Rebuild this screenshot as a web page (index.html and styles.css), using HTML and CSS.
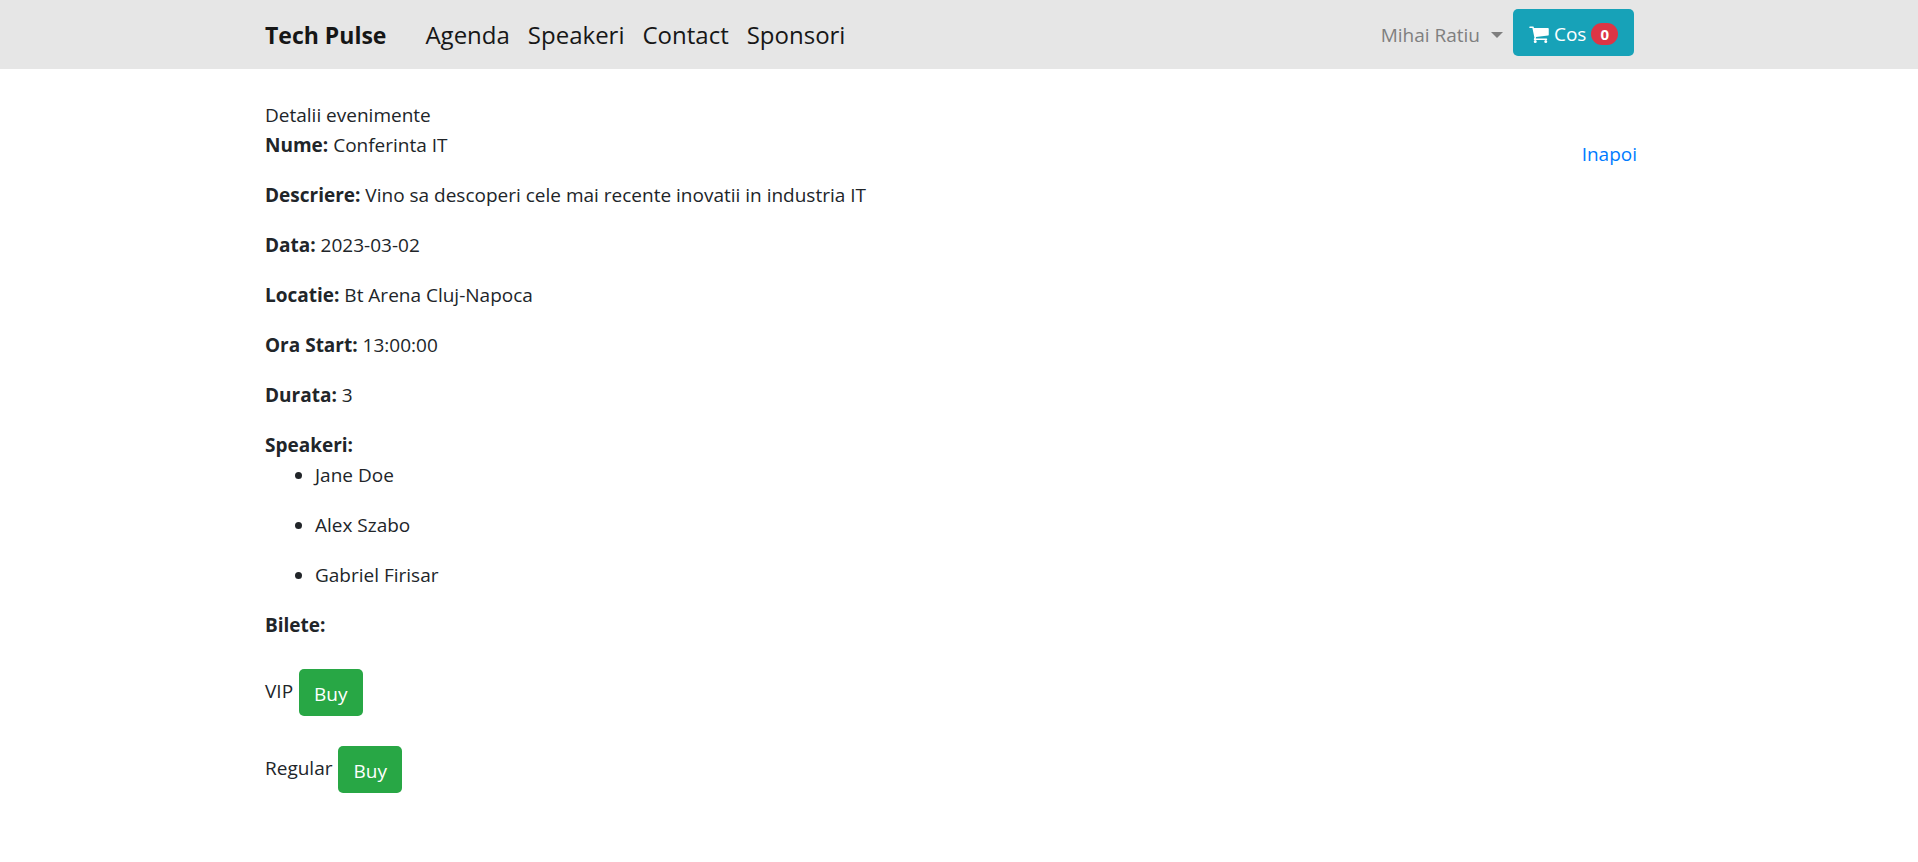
FILE: index.html
```html
<!DOCTYPE html>
<html lang="ro">
<head>
<meta charset="utf-8">
<meta name="viewport" content="width=device-width, initial-scale=1">
<title>Tech Pulse</title>
<link rel="stylesheet" href="styles.css">
</head>
<body>
<header class="navbar">
  <div class="container navbar-inner">
    <a class="brand" href="#">Tech Pulse</a>
    <nav class="nav">
      <a class="nav-link" href="#">Agenda</a>
      <a class="nav-link" href="#">Speakeri</a>
      <a class="nav-link" href="#">Contact</a>
      <a class="nav-link" href="#">Sponsori</a>
    </nav>
    <button class="user-toggle" type="button">Mihai Ratiu<span class="caret"></span></button>
    <button class="cart" type="button">
      <svg class="cart-icon" viewBox="0 0 1664 1536" aria-hidden="true"><path fill="currentColor" d="M640 1408a128 128 0 1 1-256 0a128 128 0 1 1 256 0zm896 0a128 128 0 1 1-256 0a128 128 0 1 1 256 0zm128-1088v512q0 24-16.500 42.500t-40.500 21.500l-1044 122q13 60 13 70q0 16-24 64h920q26 0 45 19t19 45t-19 45t-45 19h-1024q-26 0-45-19t-19-45q0-11 8-31.500t16-36t21.500-40t15.500-29.500l-177-823h-204q-26 0-45-19t-19-45t19-45t45-19h256q16 0 28.500 6.500t19.500 15.500t13 24.500t8 26t5.500 29.500t4.500 26h1201q26 0 45 19t19 45z"/></svg>
      Cos
      <span class="badge">0</span>
    </button>
  </div>
</header>
<main class="container event">
  <div class="details">
    <p class="heading">Detalii evenimente</p>
    <p class="field"><strong>Nume:</strong> Conferinta IT</p>
    <p class="field"><strong>Descriere:</strong> Vino sa descoperi cele mai recente inovatii in industria IT</p>
    <p class="field"><strong>Data:</strong> 2023-03-02</p>
    <p class="field"><strong>Locatie:</strong> Bt Arena Cluj-Napoca</p>
    <p class="field"><strong>Ora Start:</strong> 13:00:00</p>
    <p class="field"><strong>Durata:</strong> 3</p>
    <div class="speakers">
      <strong>Speakeri:</strong>
      <ul class="speaker-list">
        <li class="field">Jane Doe</li>
        <li class="field">Alex Szabo</li>
        <li class="field">Gabriel Firisar</li>
      </ul>
    </div>
    <strong>Bilete:</strong>
    <div class="tickets">
      <div class="ticket"><span class="ticket-name" id="vip">VIP</span><button class="buy" type="button" aria-describedby="vip">Buy</button></div>
      <div class="ticket"><span class="ticket-name" id="regular">Regular</span><button class="buy" type="button" aria-describedby="regular">Buy</button></div>
    </div>
  </div>
  <a class="back" href="#">Inapoi</a>
</main>
</body>
</html>
```
FILE: styles.css
```css
* {
  box-sizing: border-box;
}

body {
  margin: 0;
  background: #fff;
  color: #212529;
  font-family: "Segoe UI", "Open Sans", "Noto Sans", sans-serif;
  font-size: 19px;
  line-height: 30px;
}

strong {
  font-weight: 700;
}

button {
  border: 0;
  font: inherit;
  cursor: pointer;
}

a {
  text-decoration: none;
}

.container {
  width: 100%;
  max-width: 1426px;
  margin: 0 auto;
  padding: 0 35px 0 19px;
}

.navbar {
  background: #e6e6e6;
}

.navbar-inner {
  display: flex;
  align-items: flex-start;
  padding-top: 9px;
  padding-right: 38px;
  padding-bottom: 13px;
}

.brand {
  margin-right: 30px;
  color: #161616;
  font-size: 23px;
  font-weight: 700;
  line-height: 52px;
}

.nav {
  display: flex;
  flex: 1;
}

.nav-link {
  padding: 0 9px;
  color: #171717;
  font-size: 24px;
  line-height: 52px;
}

.brand,
.nav,
.nav-link {
  height: 47px;
}

.user-toggle {
  display: flex;
  align-items: center;
  gap: 11px;
  height: 47px;
  padding: 4px 10px 0;
  background: none;
  color: #7f7f7f;
}

.caret {
  border: 6px solid transparent;
  border-top-color: currentColor;
  border-bottom: 0;
}

.cart {
  display: flex;
  align-items: center;
  gap: 5px;
  height: 47px;
  padding: 3px 16px 0;
  border-radius: 5px;
  background: #17a2b8;
  color: #fff;
}

.cart-icon {
  width: 20px;
  height: 18px;
}

.badge {
  padding: 0 9px;
  border-radius: 11px;
  background: #dc3545;
  font-size: 15px;
  font-weight: 700;
  line-height: 22px;
}

.event {
  display: flex;
  justify-content: space-between;
  padding-top: 31px;
}

.heading,
.field {
  margin: 0;
}

.field {
  margin-bottom: 20px;
}

.speaker-list {
  margin: 0;
  padding-left: 50px;
}

.tickets {
  display: grid;
  gap: 30px;
  padding-top: 29px;
}

.ticket {
  display: flex;
  align-items: center;
  gap: 6px;
}

.ticket-name {
  padding-bottom: 4px;
}

.buy {
  padding: 10px 15px 7px;
  border-radius: 5px;
  background: #28a745;
  color: #fff;
}

.back {
  align-self: flex-start;
  padding-top: 39px;
  color: #007bff;
}
```
